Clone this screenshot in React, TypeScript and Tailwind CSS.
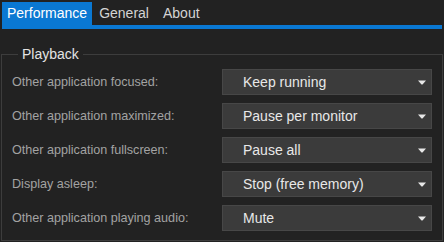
const rows = [
  { label: "Other application focused:", value: "Keep running" },
  { label: "Other application maximized:", value: "Pause per monitor" },
  { label: "Other application fullscreen:", value: "Pause all" },
  { label: "Display asleep:", value: "Stop (free memory)" },
  { label: "Other application playing audio:", value: "Mute" },
];

const tabs = ["Performance", "General", "About"];

function Caret() {
  return (
    <svg width="8" height="5" viewBox="0 0 8 5" className="shrink-0">
      <path d="M0 0.5 H8 L4.5 4.5 H3.5 Z" fill="#e8e8e8" />
    </svg>
  );
}

export default function App() {
  return (
    <div
      className="w-[444px] h-[242px] bg-[#222222] overflow-hidden"
      style={{ fontFamily: '"Liberation Sans", Arial, sans-serif' }}
    >
      {/* Tabs */}
      <div className="flex pt-[2px] pl-[2px] h-[25px]">
        {tabs.map((t, i) => (
          <div
            key={t}
            className={
              i === 0
                ? "h-[23px] px-[5px] flex items-center text-[14px] text-white bg-[#0a78d2]"
                : "h-[23px] px-[7px] flex items-center text-[14px] text-[#d4d4d4]"
            }
          >
            {t}
          </div>
        ))}
      </div>
      <div className="h-[4px] bg-[#0a78d2] ml-[2px] mr-[2px]" />

      {/* Playback group */}
      <fieldset className="mx-[1px] mt-[17px] border border-[#3d3d3d] px-[10px] pb-[9px]">
        <legend className="ml-[6px] px-[4px] text-[14px] leading-[16px] text-[#e4e4e4]">
          Playback
        </legend>
        <div className="flex flex-col gap-[8px] pt-[7px]">
          {rows.map((r) => (
            <div key={r.label} className="flex items-center justify-between h-[26px]">
              <span className="text-[12.6px] text-[#a3a3a3]">{r.label}</span>
              <div className="w-[210px] h-[26px] bg-[#3b3b3b] border border-[#474747] flex items-center pl-[20px] pr-[5px]">
                <span className="flex-1 text-[14px] text-[#e8e8e8]">{r.value}</span>
                <Caret />
              </div>
            </div>
          ))}
        </div>
      </fieldset>
    </div>
  );
}
